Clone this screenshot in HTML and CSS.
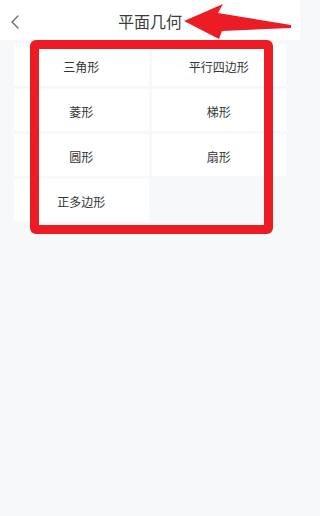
FILE: index.html
```html
<!DOCTYPE html>
<html lang="zh">
<head>
<meta charset="utf-8">
<title>平面几何</title>
<link rel="stylesheet" href="styles.css">
</head>
<body>
<div class="page">
  <header class="nav">
    <span class="back">
      <svg width="10" height="14" viewBox="0 0 10 14"><path d="M8 1 L2 7 L8 13" fill="none" stroke="#666" stroke-width="1.3" stroke-linecap="round" stroke-linejoin="round"/></svg>
    </span>
    <h1 class="title">平面几何</h1>
  </header>
  <main class="grid">
    <div class="cell">三角形</div>
    <div class="cell">平行四边形</div>
    <div class="cell">菱形</div>
    <div class="cell">梯形</div>
    <div class="cell">圆形</div>
    <div class="cell">扇形</div>
    <div class="cell">正多边形</div>
  </main>
  <div class="mark-box"></div>
  <svg class="mark-arrow" width="300" height="45" viewBox="0 0 300 45">
    <polygon points="184,21 223,4 218,13 291,25 291,28 222,31 219,39" fill="#ec1c24"/>
  </svg>
</div>
</body>
</html>
```

FILE: styles.css
```css
html, body {
  margin: 0;
  padding: 0;
  background: #f7f8fa;
}
body {
  font-family: "Noto Sans CJK SC", "Noto Sans", sans-serif;
  color: #333;
}
.page {
  position: relative;
  width: 300px;
  min-height: 516px;
}
.nav {
  height: 40px;
  background: #fff;
  display: flex;
  align-items: center;
  justify-content: center;
  position: relative;
}
.back {
  position: absolute;
  left: 10px;
  top: 15px;
  display: flex;
}
.title {
  margin: 0;
  font-size: 16px;
  font-weight: 400;
  color: #3c3c3c;
  line-height: 1;
  padding-top: 2px;
}
.grid {
  display: grid;
  grid-template-columns: 1fr 1fr;
  gap: 3px;
  padding: 4px 14px 0 14px;
}
.cell {
  height: 42px;
  background: #fff;
  display: flex;
  align-items: center;
  justify-content: center;
  font-size: 12px;
  color: #333;
  padding-top: 2px;
  box-sizing: border-box;
}
.mark-box {
  position: absolute;
  left: 30px;
  top: 40px;
  width: 243px;
  height: 194px;
  box-sizing: border-box;
  border: 9px solid #ec1c24;
  border-radius: 6px;
}
.mark-arrow {
  position: absolute;
  left: 0;
  top: 0;
}
```
